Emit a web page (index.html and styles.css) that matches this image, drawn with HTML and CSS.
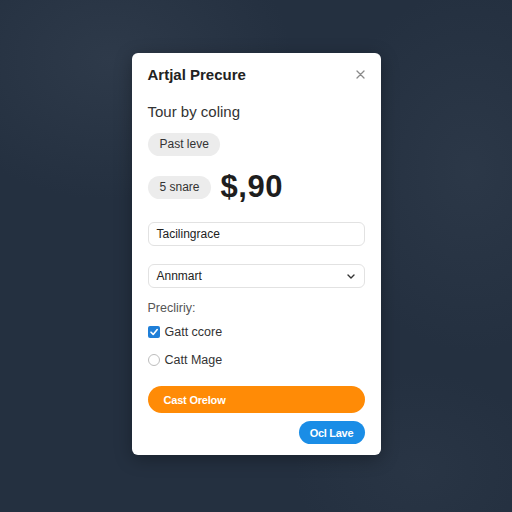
FILE: index.html
```html
<!DOCTYPE html>
<html lang="en">
<head>
  <meta charset="UTF-8">
  <title>Artial Precure</title>
  <link rel="stylesheet" href="styles.css">
</head>
<body>

<div class="dialog">
  <div class="dialog-header">
    <span class="dialog-title">Artjal Precure</span>
    <button class="close-btn">
      <svg width="9" height="9" viewBox="0 0 9 9"><path d="M1 1L8 8M8 1L1 8" stroke="#8a8a8a" stroke-width="1.3" stroke-linecap="round"/></svg>
    </button>
  </div>

  <div class="subtitle">Tour by coling</div>

  <div class="pill-row first">
    <span class="pill">Past leve</span>
  </div>

  <div class="pill-row price-row">
    <span class="pill">5 snare</span>
    <span class="price">$,90</span>
  </div>

  <div class="field text-field">Tacilingrace</div>

  <div class="field select-field">
    <span>Annmart</span>
    <svg width="8" height="5" viewBox="0 0 8 5"><path d="M1 1L4 4L7 1" fill="none" stroke="#333" stroke-width="1.4" stroke-linecap="round" stroke-linejoin="round"/></svg>
  </div>

  <div class="group-label">Precliriy:</div>

  <label class="option first-option">
    <span class="check checked">
      <svg width="10" height="10" viewBox="0 0 10 10"><path d="M2 5.2L4.2 7.4L8.2 2.6" fill="none" stroke="white" stroke-width="1.6" stroke-linecap="round" stroke-linejoin="round"/></svg>
    </span>
    Gatt ccore
  </label>

  <label class="option">
    <span class="radio"></span>
    Catt Mage
  </label>

  <button class="btn-orange">Cast Orelow</button>

  <div class="actions">
    <button class="btn-blue">Ocl Lave</button>
  </div>
</div>

</body>
</html>
```

FILE: styles.css
```css
html { background: #253140; }
body {
  margin: 0;
  padding-top: 53px;
  height: 459px;
  display: flex;
  justify-content: center;
  align-items: flex-start;
  font-family: "Liberation Sans", Arial, sans-serif;
  background:
    radial-gradient(ellipse 260px 200px at 110px 60px, rgba(58,70,86,0.45), transparent 70%),
    radial-gradient(ellipse 200px 260px at 470px 170px, rgba(58,70,86,0.35), transparent 70%),
    radial-gradient(ellipse 180px 140px at 420px 470px, rgba(50,62,78,0.35), transparent 70%),
    #243040;
}
.dialog {
  width: 249px;
  box-sizing: border-box;
  padding: 11px 16px 11px;
  background: white;
  border-radius: 6px;
  box-shadow: 0 4px 18px rgba(0,0,0,0.3);
  display: flex;
  flex-direction: column;
}
.dialog-header {
  height: 20px;
  display: flex;
  justify-content: space-between;
  align-items: center;
}
.dialog-title {
  font-size: 15px;
  font-weight: bold;
  color: #222;
}
.close-btn {
  background: none;
  border: none;
  padding: 0;
  margin-right: 0;
  width: 9px;
  height: 9px;
  display: flex;
  cursor: pointer;
}
.subtitle {
  margin-top: 18px;
  height: 20px;
  line-height: 20px;
  font-size: 15px;
  color: #333;
}
.pill-row {
  display: flex;
  align-items: center;
}
.pill-row.first { margin-top: 11px; }
.price-row { margin-top: 19px; height: 24px; gap: 10px; }
.pill {
  height: 23px;
  line-height: 23px;
  padding: 0 11px 0 12px;
  background: #ececec;
  border-radius: 12px;
  font-size: 12px;
  color: #333;
}
.price {
  font-size: 31px;
  font-weight: bold;
  color: #1e1e1e;
  line-height: 24px;
  letter-spacing: 0.5px;
}
.field {
  box-sizing: border-box;
  height: 24px;
  border: 1px solid #e2e2e2;
  border-radius: 6px;
  padding: 0 9px 0 8px;
  font-size: 12px;
  color: #222;
  display: flex;
  align-items: center;
}
.text-field { margin-top: 23px; }
.select-field {
  margin-top: 18px;
  justify-content: space-between;
}
.group-label {
  margin-top: 12px;
  height: 16px;
  line-height: 16px;
  font-size: 12.5px;
  color: #555;
}
.option {
  height: 16px;
  margin-top: 12px;
  display: flex;
  align-items: center;
  gap: 5px;
  font-size: 12.5px;
  color: #333;
}
.option.first-option { margin-top: 8px; }
.check {
  width: 12px;
  height: 12px;
  box-sizing: border-box;
  border-radius: 2px;
  display: flex;
  align-items: center;
  justify-content: center;
}
.check.checked { background: #1f7fd8; }
.radio {
  width: 12px;
  height: 12px;
  box-sizing: border-box;
  border: 1px solid #bdbdbd;
  border-radius: 50%;
  background: white;
}
.btn-orange {
  margin-top: 18px;
  height: 27px;
  border: none;
  border-radius: 14px;
  background: #ff8b06;
  color: white;
  font-family: inherit;
  font-weight: bold;
  font-size: 11px;
  letter-spacing: -0.2px;
  text-align: left;
  padding: 0 16px;
  cursor: pointer;
}
.actions {
  margin-top: 8px;
  display: flex;
  justify-content: flex-end;
}
.btn-blue {
  height: 23px;
  width: 66px;
  border: none;
  border-radius: 12px;
  background: #1a8de6;
  color: white;
  font-family: inherit;
  font-weight: bold;
  font-size: 11px;
  letter-spacing: -0.3px;
  padding: 0;
  cursor: pointer;
}
```
